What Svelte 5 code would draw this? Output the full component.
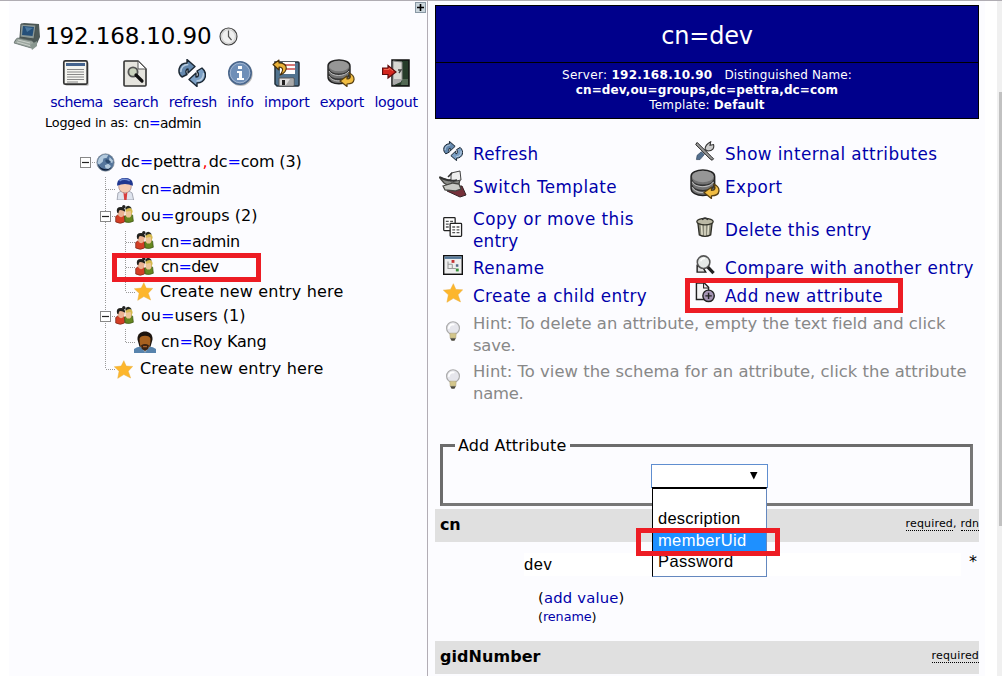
<script>
  const tools = [
    { name: 'schema', w: 52 }, { name: 'search', w: 45 }, { name: 'refresh', w: 48 },
    { name: 'info', w: 26 }, { name: 'import', w: 45 }, { name: 'export', w: 44 }, { name: 'logout', w: 43 }
  ];
  // cells: v = vertical line, t = tee, l = corner, b = collapse box, r = root box, e = empty
  const tree = [
    { cells: 'r', icon: 'globe', h: 26, w: 180, text: ['dc', '=', 'pettra', ' ,', 'dc', '=', 'com (3)'] },
    { cells: 'et', icon: 'admin', h: 27, w: 78, text: ['cn', '=', 'admin'] },
    { cells: 'eb', icon: 'group', h: 27, w: 116, text: ['ou', '=', 'groups (2)'] },
    { cells: 'evt', icon: 'group', h: 25, w: 78, text: ['cn', '=', 'admin'] },
    { cells: 'evt', icon: 'group', h: 26, w: 57, text: ['cn', '=', 'dev'], marked: true },
    { cells: 'evl', icon: 'star', h: 23, w: 183, text: ['Create new entry here'] },
    { cells: 'eb', icon: 'group', h: 26, w: 104, text: ['ou', '=', 'users (1)'] },
    { cells: 'evl', icon: 'person', h: 26, w: 105, text: ['cn', '=', 'Roy Kang'] },
    { cells: 'el', icon: 'star', h: 28, w: 183, text: ['Create new entry here'] }
  ];
  const menu = [
    { h: 28, items: [['refresh', 20, ['Refresh'], [65]], ['tools', 20, ['Show internal attributes'], [212]]] },
    { h: 38, items: [['switch', 28, ['Switch Template'], [143.5]], ['export', 30, ['Export'], [57]]] },
    { h: 48, items: [['copy', 20, ['Copy or move this', 'entry'], [160.5, 45]], ['trash', 20, ['Delete this entry'], [146]]] },
    { h: 28, items: [['rename', 20, ['Rename'], [71]], ['compare', 20, ['Compare with another entry'], [248.5]]] },
    { h: 28, items: [['star', 20, ['Create a child entry'], [173.5]], ['add', 20, ['Add new attribute'], [157.5], true]] }
  ];
  const hints = [
    [['Hint: To delete an attribute, empty the text field and click', 472], ['save.', 42]],
    [['Hint: To view the schema for an attribute, click the attribute', 493], ['name.', 50]]
  ];

  // Tracks a line of text out so that it takes the given width.
  function fit(node, width) {
    node.style.letterSpacing = '0px';
    const natural = node.getBoundingClientRect().width;
    const count = node.textContent.length;
    node.style.letterSpacing = `${(width + 0.5 - natural) / count}px`;
  }
</script>

{#snippet icon(name, size)}
  <svg width={size} height={size} viewBox="0 0 28 28" aria-hidden="true">
    {#if name === 'schema'}
      <rect x="3" y="3" width="24" height="24" rx="2" fill="#ccc" />
      <rect x="1.8" y="1.8" width="23.4" height="23.4" rx="1.5" fill="#f4f4f0" stroke="#333" stroke-width="1.7" />
      <rect x="4" y="4" width="19" height="3" fill="#44638e" />
      <path d="M5 10.5h17M5 13h17M5 15.5h17M5 18h17M5 20.5h17M5 23h11" stroke="#888" stroke-width="1.1" />
    {:else if name === 'search'}
      <path d="M3 3q0-1 1-1h13l8 8v16q0 1-1 1H4q-1 0-1-1z" fill="#e6e5df" stroke="#333" stroke-width="1.6" />
      <path d="M17 2v8h8z" fill="#fff" stroke="#555" />
      <circle cx="12" cy="13" r="4.6" fill="#c9d2bd" stroke="#555" stroke-width="1.8" />
      <path d="m15 16 6 6" stroke="#111" stroke-width="3.2" stroke-linecap="round" />
    {:else if name === 'refresh'}
      <path d="M4 18C-1 14 0 4 9 4V.5l8 7-7 6.500V10c-2 0-3 3-1 5.500z" fill="#6488ae" stroke="#1b2733" stroke-width="1.4" stroke-linejoin="round" />
      <path d="M24 9c6 5 4 15-5 15v3.500l-8-7 7-6.500v4c3 0 3-3 1-6z" fill="#7b9fc4" stroke="#1b2733" stroke-width="1.4" stroke-linejoin="round" />
      <path d="M2.800 13c0-4.500 3-7.500 7.500-7.500M25.500 14c0 4.500-2 8-7 8" fill="none" stroke="#b9cde0" stroke-width="1.400" />
    {:else if name === 'info'}
      <circle cx="14.7" cy="15" r="12" fill="#bbb" />
      <circle cx="14" cy="14" r="11.2" fill="#6f8fb8" stroke="#4b678c" stroke-width="1.6" />
      <circle cx="14" cy="14" r="9.8" fill="none" stroke="#a0b4cf" />
      <path d="M12 7h4v3h-4zM11 12h5v7h2v2h-7v-2h2v-5h-2z" fill="#fff" />
    {:else if name === 'import'}
      <path d="M3 3h23q1 0 1 1v22q0 1-1 1H5l-2-2z" fill="#51738f" stroke="#222f3a" stroke-width="1.5" />
      <path d="M11 3h12v12H8V9z" fill="#fff" />
      <path d="M12 6h11M12 10h11" stroke="#d47777" stroke-width="2" />
      <path d="M7 19h15v8H7z" fill="#ddd" stroke="#555" /><path d="M10 21h3v5h-3z" fill="#222" /><path d="m14 26 4-6h3v6z" fill="#aaa" />
      <path d="M1 5.500 7 1v3c10 0 9 9 1 12 4-5 3-8-1-8v3z" fill="#e9b23a" stroke="#493007" stroke-width="1.1" stroke-linejoin="round" />
    {:else if name === 'export'}
      <path d="M1 7c0-8 22-8 22 0v11c0 9-22 9-22 0z" fill="#737373" stroke="#222" stroke-width="1.4" />
      <ellipse cx="12" cy="7" rx="10" ry="5.3" fill="#969696" />
      <path d="M1.5 10c2 7 19 7 21 0M1.500 15c2 7 19 7 21 0" fill="none" stroke="#333" stroke-width="1.5" />
      <path d="M2 12c3 6 16 6 20 0M2 17c3 5 10 6 14 4" fill="none" stroke="#bbb" stroke-width="1" />
      <path d="m13 22 7-5v3c4 0 4-3 2-6 7 3 7 11-2 11v2.500z" fill="#f0bc42" stroke="#574013" stroke-width="1.2" stroke-linejoin="round" />
    {:else if name === 'logout'}
      <path d="M10 1h17v26H10z" fill="#263c29" stroke="#111" stroke-width="1.5" />
      <path d="M20 20h6v6h-7z" fill="#526853" />
      <path d="m11 2 9 1v18l-9 5z" fill="#d7d8d2" stroke="#888" /><path d="M12 20h7v3l-7 3z" fill="#aaa" />
      <path d="M16 11h3l-2 3" fill="none" stroke="#444" stroke-width="1.4" />
      <path d="M.5 9H6V6.500l8 6.500-8 6v-3.500H.5z" fill="#d3261e" stroke="#5d0c0c" stroke-width="1.2" /><path d="M2 10.500h5V9l4 3" fill="none" stroke="#f06b53" />
    {:else if name === 'computer'}
      <path d="m8 2 3-1 15 1 1 13-4 9-5 2-17-5 1-3 5-3z" fill="#4d5957" />
      <path d="m8 2 15 1-2 14-14-2z" fill="#8b9896" stroke="#47514f" /><path d="m10 4 11 1-1.5 9L9 13z" fill="#244f79" />
      <path d="m12 5 8 1-6 4z" fill="#4d7aa0" />
      <path d="m4 16 15 3 4 4-5 3-17-5z" fill="#9ba69f" stroke="#6a7673" stroke-width=".6" /><path d="m5 18 12 3M4 20l14 4" stroke="#c9cfca" /><path d="m17 23 7-4v5l-5 4z" fill="#899790" />
    {:else if name === 'clock'}
      <circle cx="14" cy="14" r="12.5" fill="#efefef" stroke="#444" stroke-width="1.7" />
      <circle cx="14" cy="14" r="10.2" fill="none" stroke="#ccc" stroke-width="1.5" />
      <path d="M14 5v9l4.500 5.500" fill="none" stroke="#555" stroke-width="1.8" />
    {:else if name === 'globe'}
      <circle cx="14" cy="14" r="12.8" fill="#55769c" stroke="#7c848c" />
      <path d="M4 8c4-6 10-7 14-5l-2 4-5 1-1 5-5 4-3-2zM20 6l5 5-1 4-5-3zM13 18l5-2 4 3-3 5-5-2z" fill="#b3cadd" />
      <path d="M3 17c4 7 13 9 20 4-6 8-17 6-20-4" fill="#0e1d36" /><path d="M14 10c4-1 6 1 8 3l-4 3c-2-2-5-2-4-6" fill="#2b4a6e" />
    {:else if name === 'admin'}
      <path d="m4 28 1-9q9-7 18 0l2 9z" fill="#dfe4ee" stroke="#9297a5" />
      <circle cx="14" cy="11" r="8" fill="#f5cbb2" stroke="#a88" /><path d="M4 7Q5 0 14 0q9 0 10 7v3Q14 5 4 10z" fill="#203790" /><path d="M7 3.500q6-4 13 0" stroke="#718cd1" stroke-width="2" fill="none" />
      <path d="m12 18 2 2 3-2-1 10h-3z" fill="#d83d3d" />
    {:else if name === 'group'}
      <path d="M1 17q6-6 13-1v9q-6 4-13 0z" fill="#d33e25" stroke="#742415" /><path d="M14 17q7-6 12-2l1 9q-6 3-12 1z" fill="#668720" stroke="#334b0c" />
      <ellipse cx="9" cy="11" rx="5.2" ry="7" fill="#eab293" /><path d="M3 11Q1 3 9 3q6 0 6 7Q9 6 6 8l-1 4z" fill="#20201d" />
      <circle cx="13" cy="2.5" r="2.5" fill="#222" /><ellipse cx="20" cy="12" rx="4.5" ry="6.500" fill="#edc597" /><path d="M16 10c-3-9 10-9 10 0l-2 5-1-6z" fill="#d5b950" /><path d="M15 4q5-6 10 1-6-2-9 2z" fill="#252820" />
    {:else if name === 'person'}
      <path d="M0 28v-5q4-3 8-3h12q4 0 8 3v5z" fill="#5783ad" /><path d="m9 20 5 8 6-8z" fill="#8fa3b5" />
      <path d="M4.500 11C3-3 25-3 23.500 11L21 20H7z" fill="#1d140e" /><path d="M7 10q1-4 7-4t7 4q0 9-3 12l-4 3-4-3q-3-3-3-12z" fill="#a7611f" /><path d="M9 18q5-3 10 0l-1 5-4 2-4-2z" fill="#3a2211" /><path d="M11.500 19h5v1.700h-5z" fill="#a8612b" />
    {:else if name === 'star'}
      <path d="m14.500 1 3.500 8 9.500.5-6.500 7 3.500 10-10-5-9 5.500 2-10.500-7-6.500 10-1z" fill="#fdb62c" stroke="#e8ae3c" stroke-width=".7" />
    {:else if name === 'tools'}
      <path d="m3 2 20 20 3 3-2 2-3-2L1 5z" fill="#999" stroke="#222" stroke-width="1.4" />
      <path d="M14 12c0-5 2-8 8-11l-1 5 5-1q2 8-8 9z" fill="#ccc" stroke="#333" stroke-width="1.5" /><path d="m3 20 6-5 4 4-6 7H2z" fill="#536f8e" stroke="#34485e" />
    {:else if name === 'switch'}
      <path d="m10 17 13-1 4 9-6 2-13-6z" fill="#76303a" stroke="#342326" />
      <path d="m0 7 10 3 11-1-1 5-10 2-5-3z" fill="#8b8c88" stroke="#454541" stroke-width="1.3" /><path d="m4 16 10-3 6 1 2 5-6 2-10-1z" fill="#c9cac5" stroke="#454541" stroke-width="1.3" />
      <path d="m12 3 9-2 1 9-10 2z" fill="#eee" stroke="#444" /><path d="M1 7q7 5 17 3M9 7l4-4" stroke="#333" stroke-width="1.6" fill="none" />
    {:else if name === 'copy'}
      {#each [[1, 1], [10, 9]] as [x, y]}
        <rect {x} {y} width="16" height="18" rx="1" fill="#fff" stroke="#222" stroke-width="1.8" /><path d={`M${x + 3} ${y + 5}h4m2 0h4m-10 4h4m2 0h4m-10 4h4m2 0h4`} stroke="#555" stroke-width="1.8" />
      {/each}
    {:else if name === 'rename'}
      <rect x="1" y="1" width="26" height="26" fill="#eee" stroke="#111" stroke-width="2" /><rect x="2" y="2" width="24" height="3.5" fill="#547798" /><path d="M7 9v10h6M7 13h6M13 13v6h5" stroke="#999" fill="none" stroke-width="1.5" /><rect x="12" y="7" width="4" height="4" fill="#c43333" /><rect x="18" y="13" width="3.500" height="3.500" fill="#556a88" /><rect x="18" y="19" width="4" height="4" fill="#3a933b" />
    {:else if name === 'trash'}
      <path d="m4 8 2 17q8 4 16 0l2-17z" fill="#888878" stroke="#2b2b24" stroke-width="1.8" /><path d="m9 10 1 15m4-15v16m5-16-1 15" stroke="#e1dfca" stroke-width="2.2" /><ellipse cx="14" cy="6.5" rx="11.5" ry="4.5" fill="#bbb9a5" stroke="#333329" stroke-width="1.8" /><path d="M10 4q4-5 8 0" stroke="#333" fill="none" stroke-width="2" />
    {:else if name === 'compare'}
      <path d="M3 15v9h12l-3-5z" fill="#ddd" stroke="#222" stroke-width="2" /><circle cx="12" cy="10" r="8.800" fill="#e5e9e7" stroke="#555" stroke-width="2.2" /><path d="M8 9q1-5 6-4" stroke="#fff" stroke-width="2" fill="none" /><path d="m18 17 8 8.500" stroke="#222" stroke-width="4.500" />
    {:else if name === 'add'}
      <path d="M2 0h11l6 6v17H2z" fill="#f4f4f4" stroke="#222" stroke-width="2" /><path d="M12 0v7h7" fill="none" stroke="#222" stroke-width="1.5" /><circle cx="19" cy="18" r="8" fill="#a494b3" stroke="#222" stroke-width="2" /><path d="M19 13.5v9M14.5 18h9" stroke="#222" stroke-width="2" />
    {:else if name === 'bulb'}
      <circle cx="14" cy="10" r="9" fill="#e6e6ec" stroke="#aaa" stroke-width="1.6" /><path d="M8 11c0-6 5-7 8-6" stroke="#fff" stroke-width="2.5" fill="none" /><path d="M9.500 17h9l-.5 7h-8z" fill="#d3c68b" stroke="#a99f78" stroke-width=".7" /><path d="M10 24h8l-2 3.500h-4z" fill="#4b483d" />
    {/if}
  </svg>
{/snippet}

{#snippet branch(kind, h)}
  {@const m = Math.round(h / 2)}
  <svg width="20" height={h} viewBox={`0 0 20 ${h}`} aria-hidden="true">
    <g stroke="#999" stroke-dasharray="1 1" fill="none">
      {#if kind === 'v' || kind === 't' || kind === 'b'}<path d={`M10.5 2V${h}`} />{/if}
      {#if kind === 'l'}<path d={`M10.5 0V${m}`} />{/if}
      {#if kind !== 'v' && kind !== 'e'}<path d={`M11 ${m + 0.5}h9`} />{/if}
    </g>
    {#if kind === 'b' || kind === 'r'}
      <rect x="5.5" y={m - 4.5} width="10" height="10" fill="#fff" stroke="#888" />
      <path d={`M7 ${m + 0.5}h7`} stroke="#222" stroke-width="1.2" />
    {/if}
  </svg>
{/snippet}

<div class="page">
  <aside>
    <span class="expand"><svg width="9" height="9" viewBox="0 0 9 9"><path d="M1 4.500h7M4.500 1v7" stroke="#000" stroke-width="1.600" /></svg></span>
    <div class="server">{@render icon('computer', 28)}<h1><span use:fit={166}>192.168.10.90</span></h1>{@render icon('clock', 19)}</div>
    <nav>
      {#each tools as tool}
        <a href="#top" style:width="{tool.w}px">{@render icon(tool.name, 28)}<span use:fit={tool.w}>{tool.name}</span></a>
      {/each}
    </nav>
    <div class="login"><span use:fit={83}>Logged in as:</span><b use:fit={67}>cn<i>=</i>admin</b></div>
    <div class="tree">
      {#each tree as row}
        <div class="row" style:height="{row.h}px">
          {#each row.cells as kind}{@render branch(kind, row.h)}{/each}
          <span class="node-icon {row.icon}">{@render icon(row.icon, row.icon === 'admin' || row.icon === 'person' ? 22 : 19)}</span>
          <span class="label" class:create={row.icon === 'star'} use:fit={row.w}>{#each row.text as part}{#if part === '='}<i>=</i>{:else if part === ' ,'}<em>&#8202;,&#8202;</em>{:else}{part}{/if}{/each}</span>
          {#if row.marked}<span class="mark"></span>{/if}
        </div>
      {/each}
    </div>
  </aside>

  <main>
    <header>
      <h2><span use:fit={91}>cn=dev</span></h2>
      <div class="details">
        <div><span use:fit={150}>Server: <b>192.168.10.90</b></span><span use:fit={127}>Distinguished Name:</span></div>
        <div><b use:fit={262}>cn=dev,ou=groups,dc=pettra,dc=com</b></div>
        <div><span use:fit={115}>Template: <b>Default</b></span></div>
      </div>
    </header>

    <div class="menu">
      {#each menu as line}
        <div class="menu-row" style:height="{line.h}px">
          {#each line.items as [name, size, texts, widths, marked]}
            <a href="#top">
              <span class="menu-icon">{@render icon(name, size)}</span>
              <span>{#each texts as text, i}<span class="line"><span use:fit={widths[i]}>{text}</span></span>{/each}</span>
              {#if marked}<span class="mark"></span>{/if}
            </a>
          {/each}
        </div>
      {/each}
      <div class="hints">
        {#each hints as hint}
          <div class="hint">
            <span class="menu-icon">{@render icon('bulb', 20)}</span>
            <span>{#each hint as [text, w]}<span class="line"><span use:fit={w}>{text}</span></span>{/each}</span>
          </div>
        {/each}
      </div>
    </div>

    <fieldset>
      <legend><span use:fit={108}>Add Attribute</span></legend>
      <div class="select"><svg width="8" height="8" viewBox="0 0 8 8"><path d="M0 0h7.5L3.8 7.5z" /></svg>
        <div class="options">
          <div></div>
          <div><span use:fit={82}>description</span></div>
          <div class="active"><span use:fit={88}>memberUid</span></div>
          <div><span use:fit={75}>Password</span></div>
          <span class="mark"></span>
        </div>
      </div>
    </fieldset>

    <section class="attr"><b use:fit={20}>cn</b><span class="notes"><u use:fit={47}>required</u><span>,</span><u use:fit={18}>rdn</u></span></section>
    <div class="value"><div class="field"><span use:fit={28}>dev</span></div><span class="required">*</span></div>
    <div class="actions"><div><span use:fit={86}>(<a href="#top">add value</a>)</span></div><div class="small"><span use:fit={58}>(<a href="#top">rename</a>)</span></div></div>
    <section class="attr"><b use:fit={100}>gidNumber</b><span class="notes"><u use:fit={47}>required</u></span></section>
  </main>
  <div class="scroll"><div></div></div>
</div>

<style>
  :global(body) { margin: 0; overflow: hidden; background: #fff; }
  * { box-sizing: border-box; }
  .page { display: flex; width: 1002px; height: 676px; padding-left: 9px; border-top: 1px solid #b0adb3; font: 16px "DejaVu Sans", sans-serif; color: #000; background: #fff; overflow: hidden; white-space: nowrap; }
  svg { display: block; flex: none; }
  a { color: #00a; text-decoration: none; }
  i { color: #00f; font-style: normal; }
  em { color: #f00; font-style: normal; }
  aside { position: relative; width: 419px; flex: none; background: #fcfcff; border-right: 1px solid #b2adb5; padding-top: 19px; }
  .expand { position: absolute; top: 1px; right: 1px; width: 11px; height: 11px; border: 1px solid #8998a4; background: #cbd6dc; }
  .server { display: flex; align-items: center; height: 32px; padding-left: 4px; }
  h1 { margin: 0 6px 0 4px; width: 168px; font-size: 23px; font-weight: normal; line-height: 30px; }
  nav { display: flex; gap: 10.7px; margin: 7px 0 0 41.5px; }
  nav a { display: flex; flex: none; flex-direction: column; align-items: center; font-size: 14.2px; line-height: 20px; gap: 5px; }
  nav svg { margin-left: -1px; }
  .login { display: flex; gap: 5px; margin-left: 36px; padding-top: 2px; font-size: 12.8px; line-height: 18px; }
  .login b { font-weight: normal; font-size: 13.8px; }
  .tree { padding: 17px 0 0 66px; }
  .row { display: flex; align-items: center; position: relative; }
  .node-icon { width: 20px; display: flex; justify-content: center; flex: none; }
  .node-icon.group { padding: 0 2px 2px 0; }
  .node-icon.star { padding-right: 3px; }
  .label { margin-left: 6px; font-size: 16px; line-height: 22px; }
  .create { margin-left: 5px; }
  .mark { position: absolute; border: 5px solid #ed1c24; z-index: 5; }
  .row .mark { left: 37px; top: -1px; width: 149px; height: 29px; }
  main { width: 557px; flex: none; margin-right: 12px; padding: 4px 5px 0 7px; background: #fcfcff; }
  header { width: 544px; height: 114px; border: 1px solid #000; background: #00008b; color: #fff; text-align: center; }
  h2 { margin: 0; height: 57px; border-bottom: 1px solid #000; font-size: 24px; font-weight: normal; line-height: 61px; }
  .details { padding-top: 5px; font-size: 12px; line-height: 15px; }
  .details div { display: flex; justify-content: center; gap: 12px; }
  .menu { padding-top: 21px; }
  .menu-row { display: grid; grid-template-columns: 252px 292px; }
  .menu-row a { position: relative; display: flex; align-items: center; font-size: 16.8px; }
  .menu-icon { display: flex; justify-content: center; flex: none; width: 35px; margin-right: 3px; padding-bottom: 7px; }
  .line { display: block; line-height: 22px; }
  .menu .mark { left: -2px; top: -4px; width: 218px; height: 35px; }
  .hints { display: flex; flex-direction: column; gap: 4px; padding-top: 3px; }
  .hint { display: flex; align-items: center; height: 44px; color: #888; }
  .hint .menu-icon { padding-bottom: 8px; }
  .hint .line { font-size: 16.4px; }
  fieldset { width: 533px; height: 71px; margin: 30px 0 0 5px; padding: 8px 0 0 208px; border: 3px solid #777; border-color: #6c6c6c #777 #777 #6c6c6c; }
  legend { height: 21px; margin-left: -196px; padding: 0 3px; line-height: 22px; }
  .select { position: relative; display: flex; align-items: center; justify-content: flex-end; width: 117px; height: 24px; padding-right: 9px; border: 1px solid #5f8ed0; background: #fff; }
  .options { position: absolute; z-index: 4; top: 22px; left: 0; width: 115px; height: 90px; border: 1px solid #6488bf; border-width: 2px 1px 1px 1px; border-top-color: #000; border-left-color: #000; background: #fff; font: 16.5px/20px "Liberation Sans", Arial, sans-serif; }
  .options > div { height: 21.5px; padding-left: 5px; }
  .options > div:first-child { height: 19px; }
  .options .active { background: #1e90ff; color: #fff; }
  .options .mark { left: -17px; top: 39px; width: 144px; height: 28px; }
  .attr { display: flex; align-items: center; justify-content: space-between; width: 544px; height: 33px; padding: 0 0 3px 5px; background: #e0e0e0; }
  fieldset + .attr { margin-top: 3px; }
  .notes { display: flex; padding-top: 1px; font-size: 11px; line-height: 12px; }
  .notes span { margin-right: 4px; }
  u { text-decoration: none; border-bottom: 1px dotted #000; }
  .value { display: flex; margin: 11px 0 0 89px; height: 23px; }
  .field { width: 437px; background: #fff; font: 16.5px/22px "Liberation Sans", Arial, sans-serif; }
  .required { margin-left: 8px; font-size: 16px; line-height: 18px; }
  .actions { margin-left: 103px; padding-top: 12px; height: 65px; font-size: 14.8px; line-height: 20px; }
  .small { font-size: 12.8px; line-height: 18px; }
  .scroll { width: 6px; margin-left: auto; padding: 91px 0 0 2px; background: #f0f0f0; }
  .scroll div { height: 434px; background: #c1c1c1; }
</style>
